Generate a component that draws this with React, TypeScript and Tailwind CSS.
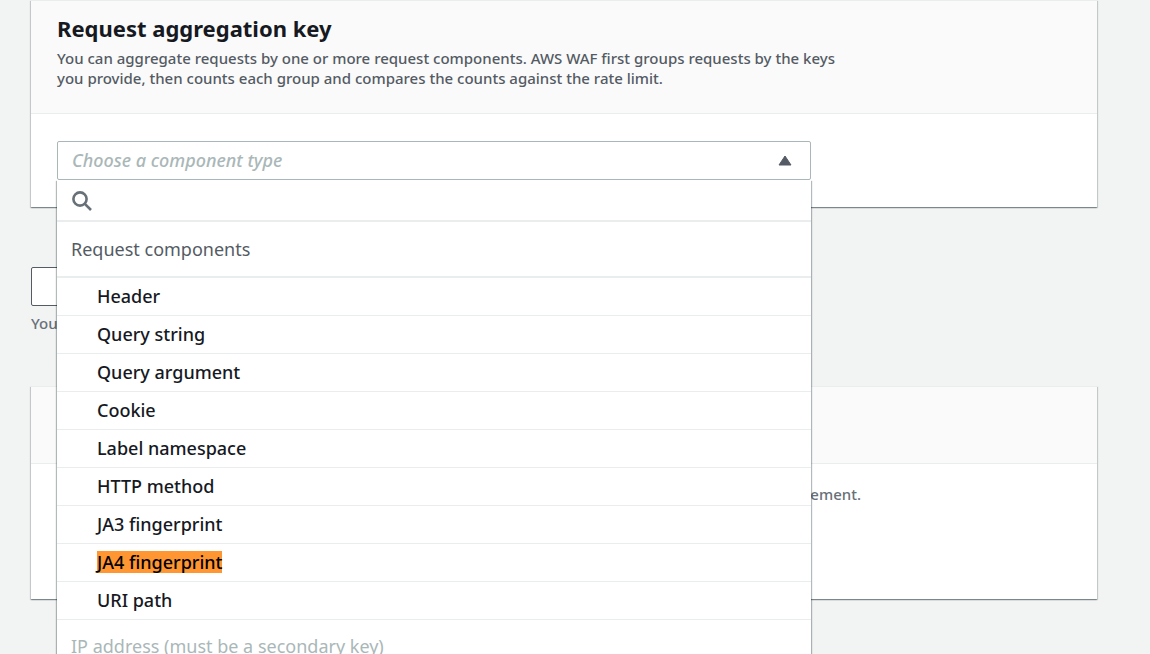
import React, { useState } from "react";

interface Option {
    label: string;
    match?: boolean;
}

const options: Option[] = [
    { label: "Header" },
    { label: "Query string" },
    { label: "Query argument" },
    { label: "Cookie" },
    { label: "Label namespace" },
    { label: "HTTP method" },
    { label: "JA3 fingerprint" },
    { label: "JA4 fingerprint", match: true },
    { label: "URI path" },
];

const cardShadow = "shadow-[0_1px_1px_0_rgba(0,28,36,0.3),1px_1px_1px_0_rgba(0,28,36,0.15),-1px_1px_1px_0_rgba(0,28,36,0.15)]";

function Card({ header, children }: { header?: React.ReactNode; children: React.ReactNode }) {
    return (
        <section className={`bg-white border-t border-[#eaeded] ${cardShadow}`}>
            <div className="bg-[#fafafa] border-b border-[#eaeded] px-[26px] pt-[15px] pb-[21px] min-h-[77px]">{header}</div>
            {children}
        </section>
    );
}

function SearchIcon() {
    return (
        <svg width="20" height="20" viewBox="0 0 20 20" fill="none" stroke="#687078" strokeWidth="2.6" aria-hidden="true">
            <circle cx="8" cy="8" r="6.6" />
            <path d="M12.6 12.6L19 19" />
        </svg>
    );
}

function ComponentSelect() {
    const [open, setOpen] = useState(true);
    const [query, setQuery] = useState("");
    const [value, setValue] = useState("");

    const visible = options.filter((o) => o.label.toLowerCase().includes(query.toLowerCase()));

    return (
        <div className="relative w-[754px] max-w-full">
            <button type="button" aria-haspopup="listbox" aria-expanded={open} aria-label="Component type" onClick={() => setOpen(!open)}
                className="flex w-full h-[39px] items-center justify-between rounded-[2px] border border-[#aab7b8] bg-white pl-[14px] pr-[18px] pb-px text-[18px]">
                {value
                    ? <span className="text-[#16191f]">{value}</span>
                    : <span className="italic font-medium text-[#aab7b8]">Choose a component type</span>}
                <svg width="14" height="11" viewBox="0 0 14 11" fill="#545b64" stroke="#545b64" strokeLinejoin="round" aria-hidden="true">
                    <path d="M7 1L13 10H1Z" />
                </svg>
            </button>

            {open && (
                <div className="absolute left-0 top-full z-10 w-full bg-white shadow-[1px_1px_1px_0_rgba(0,28,36,0.3),-1px_1px_1px_0_rgba(0,28,36,0.3)]">
                    <label className="flex h-[42px] items-center border-b-2 border-[#eaeded] px-[15px] pt-0.5">
                        <SearchIcon />
                        <input type="text" aria-label="Search components" value={query} onChange={(e) => setQuery(e.target.value)}
                            className="ml-3 flex-1 bg-transparent text-[18px] outline-none" />
                    </label>
                    <div className="flex h-14 items-center border-b-2 border-[#eaeded] px-[14px] text-[18px] font-normal text-[#545b64]">
                        Request components
                    </div>
                    <ul role="listbox" aria-label="Request components">
                        {visible.map((o) => (
                            <li key={o.label} role="option" aria-selected={value === o.label}
                                onClick={() => { setValue(o.label); setOpen(false); }}
                                className="flex h-[38px] cursor-pointer items-center border-b border-[#eaeded] px-10 pb-0.5 text-[18px] font-medium text-[#16191f]">
                                {o.match
                                    ? <mark className="bg-[#ff9632] leading-[22px] text-black">{o.label}</mark>
                                    : o.label}
                            </li>
                        ))}
                    </ul>
                    <div className="flex h-[52px] items-center px-[14px] text-[18px] font-normal text-[#aab7b8]">
                        IP address (must be a secondary key)
                    </div>
                </div>
            )}
        </div>
    );
}

export default function App() {
    return (
        <main className="h-screen overflow-hidden bg-[#f2f3f3] pl-[31px] pr-[53px] font-['Noto_Sans',sans-serif] text-[15px] font-medium leading-5">
            <Card
                header={
                    <>
                        <h2 className="text-[22px] leading-6 font-bold text-[#16191f]">Request aggregation key</h2>
                        <p className="mt-2 mb-1 max-w-[800px] text-[#545b64]">
                            You can aggregate requests by one or more request components. AWS WAF first groups requests by the keys
                            you provide, then counts each group and compares the counts against the rate limit.
                        </p>
                    </>
                }
            >
                <div className="px-[26px] py-[27px]">
                    <ComponentSelect />
                </div>
            </Card>

            <div className="mt-[60px] mb-[53px]">
                <input type="text" id="custom-key" aria-describedby="custom-key-hint" aria-label="Key"
                    className="block h-[39px] w-[400px] rounded-[2px] border border-[#545b64] bg-white px-3" />
                <p id="custom-key-hint" className="mt-[7px] text-[#687078]">You</p>
            </div>

            <Card>
                <div className="min-h-[135px] px-[26px] py-5">
                    <p className="max-w-[804px] text-right text-[#687078]">ement.</p>
                </div>
            </Card>
        </main>
    );
}
